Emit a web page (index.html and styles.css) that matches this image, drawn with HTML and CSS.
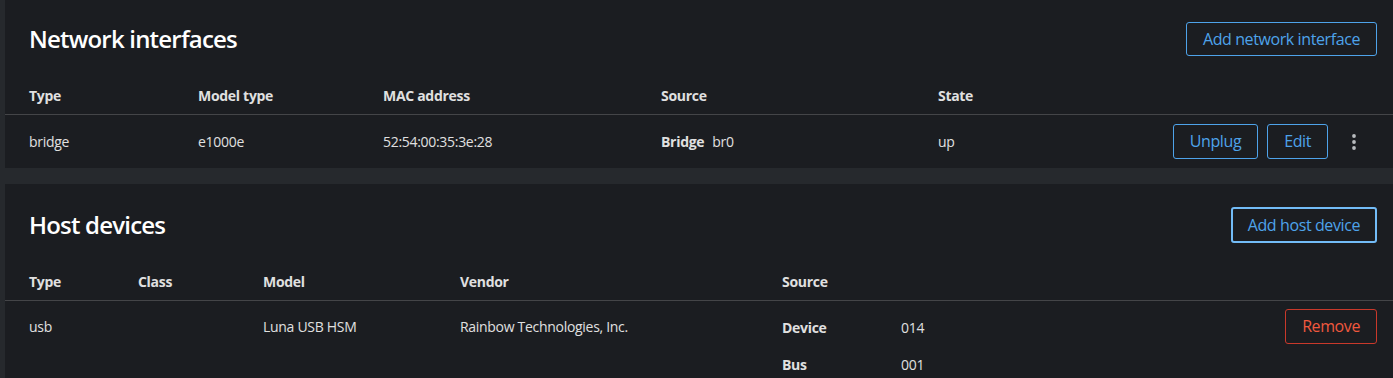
FILE: index.html
```html
<!DOCTYPE html>
<html lang="en">
<head>
  <meta charset="utf-8" />
  <title>VM devices</title>
  <link rel="stylesheet" href="styles.css">
</head>
<body>
  <div class="page">
    <section class="card">
      <header class="card-header">
        <h2 class="card-title">Network interfaces</h2>
        <button class="btn btn-secondary">Add network interface</button>
      </header>
      <table class="table">
        <colgroup>
          <col style="width:193px"><col style="width:185px"><col style="width:278px"><col style="width:277px"><col><col style="width:240px">
        </colgroup>
        <thead>
          <tr><th>Type</th><th>Model type</th><th>MAC address</th><th>Source</th><th>State</th><th></th></tr>
        </thead>
        <tbody>
          <tr class="mid">
            <td>bridge</td>
            <td>e1000e</td>
            <td>52:54:00:35:3e:28</td>
            <td><dl class="inline-dl"><dt>Bridge</dt><dd>br0</dd></dl></td>
            <td>up</td>
            <td class="actions net-actions">
              <div class="row-actions">
                <button class="btn btn-secondary">Unplug</button>
                <button class="btn btn-secondary">Edit</button>
                <button class="btn-kebab" aria-label="Actions">
                  <svg width="4" height="16" viewBox="0 0 4 16"><circle cx="2" cy="2" r="1.9"/><circle cx="2" cy="8" r="1.9"/><circle cx="2" cy="14" r="1.9"/></svg>
                </button>
              </div>
            </td>
          </tr>
        </tbody>
      </table>
    </section>

    <section class="card card-last">
      <header class="card-header">
        <h2 class="card-title">Host devices</h2>
        <button class="btn btn-secondary focused">Add host device</button>
      </header>
      <table class="table">
        <colgroup>
          <col style="width:133px"><col style="width:125px"><col style="width:197px"><col style="width:322px"><col><col style="width:160px">
        </colgroup>
        <thead>
          <tr><th>Type</th><th>Class</th><th>Model</th><th>Vendor</th><th>Source</th><th></th></tr>
        </thead>
        <tbody>
          <tr class="top">
            <td>usb</td>
            <td></td>
            <td>Luna USB HSM</td>
            <td>Rainbow Technologies, Inc.</td>
            <td>
              <dl class="source-dl">
                <dt>Device</dt><dd>014</dd>
                <dt>Bus</dt><dd>001</dd>
              </dl>
            </td>
            <td class="actions">
              <div class="row-actions">
                <button class="btn btn-danger">Remove</button>
              </div>
            </td>
          </tr>
        </tbody>
      </table>
    </section>
  </div>
</body>
</html>
```

FILE: styles.css
```css
:root{
  --page-bg:#26292d;
  --card-bg:#1b1d21;
  --text:#e0e0e0;
  --title:#ffffff;
  --border:#444548;
  --blue:#4ea3ea;
  --blue-focus:#73bcf7;
  --red:#f0583e;
  --red-border:#c9392b;
}

* { box-sizing: border-box; }

body{
  margin:0;
  background:var(--page-bg);
  color:var(--text);
  font-family:"Open Sans", "Noto Sans", sans-serif;
  font-size:14px;
  line-height:20px;
  letter-spacing:-0.3px;
}

.page{ display:flex; flex-direction:column; gap:16px; padding-left:5px; }

.card{ background:var(--card-bg); }
.card-last{ padding-bottom:3px; }

.card-header{
  display:flex; align-items:center; justify-content:space-between;
  padding:22px 16px 0 24px;
}
.card-last .card-header{ padding-top:24px; }
.card-last .card-header .btn{ margin:-1px 0; }

.card-title{
  margin:0; font-size:24px; font-weight:600; color:var(--title); letter-spacing:-0.8px;
}

.btn{
  font-family:inherit; font-size:16px; line-height:22px; letter-spacing:-0.4px;
  padding:5px 16px; border-radius:3px; background:transparent; cursor:pointer;
}
.btn-secondary{ color:var(--blue); border:1px solid var(--blue); }
.btn-secondary.focused{ border:2px solid var(--blue-focus); padding:5px 15px; }
.btn-danger{ color:var(--red); border:1px solid var(--red-border); }

.btn-kebab{
  width:36px; height:34px; padding:0; border:0; background:transparent;
  display:grid; place-items:center; cursor:pointer;
}
.btn-kebab svg{ fill:#b8bbbe; }

.table{ width:100%; border-collapse:collapse; table-layout:fixed; }
.table th, .table td{ padding:0; text-align:left; }
.table th:first-child, .table td:first-child{ padding-left:24px; }

.table th{ font-weight:700; padding-top:30px; padding-bottom:8px; border-bottom:1px solid var(--border); }

.table tr.mid td{ padding-top:9px; padding-bottom:9px; vertical-align:middle; }
.table tr.top td{ padding-top:16px; vertical-align:top; }
.table tr.top td.actions{ padding-top:8px; }

.table td.actions{ padding-right:16px; }
.table td.net-actions{ padding-right:21px; }
.row-actions{ display:flex; justify-content:flex-end; align-items:center; gap:9px; }
.row-actions .btn{ line-height:23px; }
.row-actions .btn-kebab{ margin-left:-1px; }

dl{ margin:0; }
dd{ margin:0; }
dt{ font-weight:700; }

.inline-dl{ display:flex; gap:8px; }
.source-dl{ display:grid; grid-template-columns:119px auto; row-gap:16px; line-height:21px; }
```
